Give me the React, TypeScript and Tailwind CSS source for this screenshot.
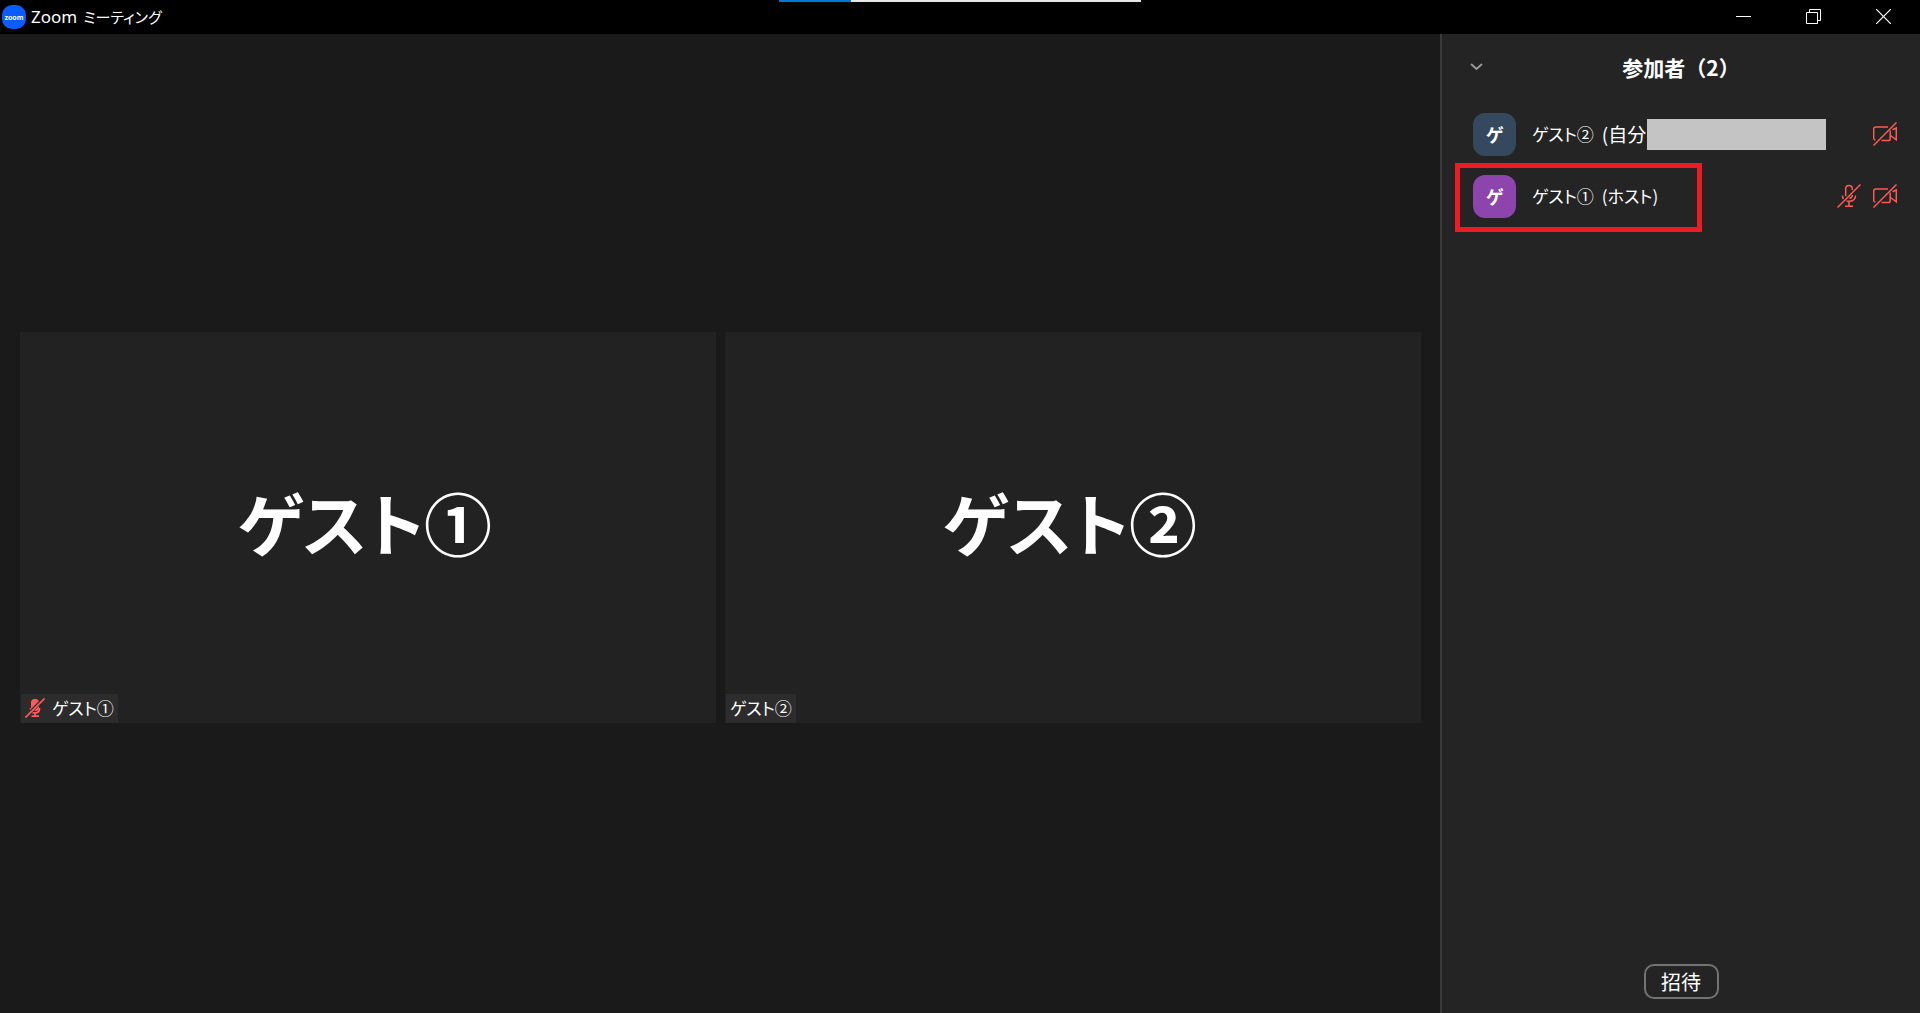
import React from "react";

type Participant = {
  id: number;
  name: string;
  role: string;
  avatar: string;
  micOff: boolean;
  redacted?: boolean;
  highlighted?: boolean;
};

const participants: Participant[] = [
  { id: 2, name: "ゲスト②", role: "(自分", avatar: "bg-[#34495e]", micOff: false, redacted: true },
  { id: 1, name: "ゲスト①", role: "(ホスト)", avatar: "bg-[#8e44ad]", micOff: true, highlighted: true },
];

const tiles = [
  { name: "ゲスト①", muted: true },
  { name: "ゲスト②", muted: false },
];

function VideoOffIcon() {
  return (
    <svg width="24" height="24" viewBox="0 0 24 24" fill="none" stroke="#ff5a55" strokeWidth="1.5" aria-hidden="true">
      <path d="M15 5H2.8Q.7 5 .7 7V16.2Q.7 17.8 2.3 18.2" />
      <path d="M17.2 8.5V16.5Q17.2 18.6 15.2 18.6H8.5" />
      <path d="M19.5 7.8L23.3 6V17.8L17.5 13.5" />
      <path d="M.5 23.5L23.5.5" />
    </svg>
  );
}

function MicOffIcon() {
  return (
    <svg width="24" height="24" viewBox="0 0 24 24" fill="none" stroke="#ff5a55" strokeWidth="1.5" aria-hidden="true">
      <path d="M8.7 12V4.7a3.3 3.3 0 0 1 6.6 0V6" />
      <path d="M5.5 11.5q0 2 1 3.5M18.5 11.5q0 5.8-6.5 5.8-1.5 0-2.5-.5M15.3 11q0 3-3 3.3" />
      <path d="M12 17.5V22M8 22.3h8" />
      <path d="M.5 23.5L23.5.5" />
    </svg>
  );
}

function MutedBadge() {
  return (
    <svg width="20" height="20" viewBox="0 0 20 20" fill="none" aria-hidden="true">
      <rect x="6" y="1" width="8" height="12" rx="3.5" fill="#ff5a5a" />
      <path d="M5.5 10q0 5 4.500 5t4.500-5M10 15v3M6.500 18.200h7.500" stroke="#ff5a5a" strokeWidth="1.800" />
      <path d="M-.5 20L20-.5" stroke="#2c2c2c" strokeWidth="3.500" />
      <path d="M.5 19.500L19.500.5" stroke="#ff5a5a" strokeWidth="1.600" />
    </svg>
  );
}

function TitleBar() {
  return (
    <header className="relative flex h-[34px] shrink-0 items-center bg-black">
      <div className="absolute top-0 left-[779px] flex h-0.5 w-[362px] bg-[#e6e6e6]">
        <div className="w-[72px] bg-[#0078d7]" />
      </div>
      <div className="ml-0.5 flex size-6 items-center justify-center rounded-[10px] bg-[#0b5cff] text-[7px] leading-none font-bold">
        zoom
      </div>
      <h1 className="ml-[5px] flex items-center gap-1.5 text-[17px] leading-6">
        <span className="font-['Noto_Sans']">Zoom</span>
        <span className="text-[15px]">ミーティング</span>
      </h1>
      <div className="ml-auto flex h-full pr-0.5 pb-0.5">
        <button aria-label="最小化" className="flex w-[70px] items-center justify-center">
          <svg width="15" height="15" viewBox="0 0 15 15" stroke="#fff" aria-hidden="true">
            <path d="M0 7.500h15" />
          </svg>
        </button>
        <button aria-label="元に戻す" className="flex w-[70px] items-center justify-center">
          <svg width="15" height="15" viewBox="0 0 15 15" fill="none" stroke="#fff" aria-hidden="true">
            <path d="M.5 3.500h11v11H.5zM3.500 3.500v-3h11v11h-3" />
          </svg>
        </button>
        <button aria-label="閉じる" className="flex w-[70px] items-center justify-center">
          <svg width="15" height="15" viewBox="0 0 15 15" stroke="#fff" strokeWidth="1.200" aria-hidden="true">
            <path d="M0 0l15 15M15 0L0 15" />
          </svg>
        </button>
      </div>
    </header>
  );
}

function VideoTile({ name, muted }: { name: string; muted: boolean }) {
  return (
    <section className="relative flex aspect-video flex-1 items-center justify-center bg-[#222222] pr-1.5 pb-3">
      <h2 className="text-[68px] leading-none font-bold">{name}</h2>
      <div className="absolute bottom-0 left-px flex h-[29px] items-center gap-[7px] bg-[#2c2c2c] px-1 pb-0.5 text-[17px] leading-6">
        {muted && <MutedBadge />}
        <span>{name}</span>
      </div>
    </section>
  );
}

function ParticipantRow({ p }: { p: Participant }) {
  return (
    <li className="relative flex h-[62px] items-center pr-[23px] pl-[31px]">
      {p.highlighted && (
        <div className="absolute -top-0.5 left-[13px] h-[69px] w-[247px] border-5 border-[#ed1c24]" />
      )}
      <div className={"flex size-[43px] shrink-0 items-center justify-center rounded-xl text-lg font-bold " + p.avatar}>
        ゲ
      </div>
      <div className="ml-4 flex items-center text-[17px] leading-6 whitespace-nowrap">
        <span>{p.name}</span>
        <span className={p.redacted ? "ml-2 w-[45px] text-[19px]" : "ml-2"}>{p.role}</span>
        {p.redacted && <span className="h-[31px] w-[179px] bg-[#c4c4c4]" />}
      </div>
      <div className="ml-auto flex gap-3">
        {p.micOff && <MicOffIcon />}
        <VideoOffIcon />
      </div>
    </li>
  );
}

export default function App() {
  return (
    <div className="flex min-h-screen flex-col bg-[#1a1a1a] font-['Noto_Sans_CJK_JP',sans-serif] text-white [font-feature-settings:'palt']">
      <TitleBar />
      <div className="flex flex-1">
        <main className="flex flex-1 items-center gap-[9px] pt-2 pr-[19px] pl-5">
          {tiles.map((t) => (
            <VideoTile key={t.name} {...t} />
          ))}
        </main>
        <aside className="flex w-[480px] shrink-0 flex-col border-l-2 border-[#3a3a3a] bg-[#242424]">
          <div className="relative flex h-[69px] items-center justify-center pb-1">
            <button aria-label="参加者パネルを閉じる" className="absolute left-7">
              <svg width="13" height="8" viewBox="0 0 13 8" fill="none" stroke="#999" strokeWidth="2" aria-hidden="true">
                <path d="M1 1l5.500 5L12 1" />
              </svg>
            </button>
            <h2 className="text-[21px] leading-6 font-bold [font-feature-settings:normal]">参加者（2）</h2>
          </div>
          <ul>
            {participants.map((p) => (
              <ParticipantRow key={p.id} p={p} />
            ))}
          </ul>
          <div className="mt-auto flex justify-center pb-3.5">
            <button className="h-[35px] w-[75px] rounded-[10px] border-2 border-[#737373] text-xl leading-6">
              招待
            </button>
          </div>
        </aside>
      </div>
    </div>
  );
}
